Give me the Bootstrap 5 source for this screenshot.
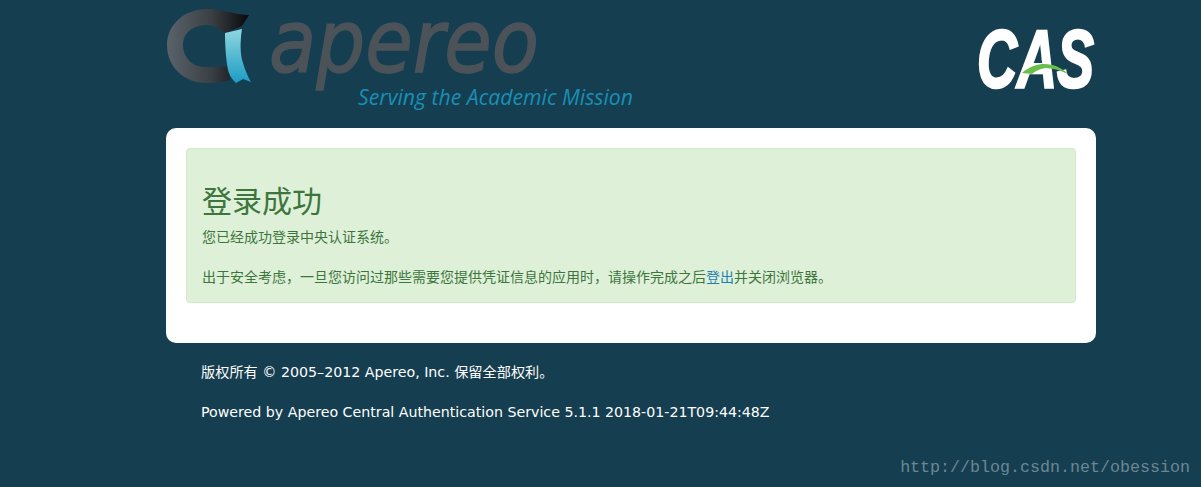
<!DOCTYPE html>
<html lang="zh">
<head>
<meta charset="utf-8">
<title>CAS</title>
<link href="https://cdn.jsdelivr.net/npm/bootstrap@5.3.0/dist/css/bootstrap.min.css" rel="stylesheet">
<style>
html,body{height:487px;overflow:hidden}
body{background:#153e50;font-family:"DejaVu Sans","Noto Sans CJK SC",sans-serif;position:relative}
.shell{width:930px;margin-left:166px}
.brand-row{height:128px}
.logo-left{width:480px;height:128px;display:block}
.logo-cas{width:120px;height:90px;display:block;margin-top:12px}
.panel{background:#fff;border-radius:10px;padding:20px;height:215px}
.ok-box{background:#dff0d8;border:1px solid #d0e9c6;color:#3c763d;border-radius:4px;height:155px;padding:15px;font-family:"Liberation Sans","Noto Sans CJK SC",sans-serif;font-size:14px;line-height:20px}
.ok-box h2{font-size:30px;line-height:33px;font-weight:400;margin:21px 0 9px;color:#3c763d}
.ok-box p{margin:0 0 20px}
.ok-box p.tail{margin-top:-1px}
.ok-box a{color:#1f7fb0;text-decoration:none}
.cn-comma{font-family:"Noto Sans CJK TC",sans-serif}
.foot{padding:19px 35px 0;color:#fff;font-size:14.2px;line-height:20px}
.foot p{margin:0 0 20px}
.mark-url{position:absolute;right:11px;bottom:9px;color:#6b8792;font:16.67px/20px "Liberation Mono",monospace}
</style>
</head>
<body>
<div class="shell">
  <header class="brand-row d-flex justify-content-between align-items-start">
    <svg class="logo-left" viewBox="0 0 480 128" role="img" aria-label="apereo">
      <defs>
        <linearGradient id="ring" x1="0" x2="1" y1="0" y2="0"><stop offset="0" stop-color="#59636a"/><stop offset=".55" stop-color="#3a3f44"/><stop offset="1" stop-color="#08090b"/></linearGradient>
        <linearGradient id="rib" x1="0" x2="0" y1="0" y2="1"><stop offset="0" stop-color="#8fd6e0"/><stop offset="1" stop-color="#1b9cc4"/></linearGradient>
      </defs>
      <path d="M83 15L76 26L59 33C53 28 47 25 41 25C27 25 17 33 17 45C17 58 27 67 39 67C47 67 55 67 62 66L64 80C56 82 49 83 41 83C18 83 1 67 1 45C1 24 19 9 41 9C55 9 69 15 83 15Z" fill="url(#ring)"/>
      <path d="M59 33L76 29C74 42 74 54 77 63C79 70 82 77 85 82L77 79L70 83C65 78 63 74 62 70C60 60 59 46 59 33Z" fill="url(#rib)"/>
      <text x="103" y="72" font-family="DejaVu Sans, sans-serif" font-style="italic" font-size="88" fill="#4b5359" stroke="#4b5359" stroke-width="1.5" textLength="270" lengthAdjust="spacingAndGlyphs">apereo</text>
      <text x="192" y="105" font-family="Open Sans, sans-serif" font-style="italic" font-size="22" fill="#1a8fb5" textLength="275" lengthAdjust="spacingAndGlyphs">Serving the Academic Mission</text>
    </svg>
    <svg class="logo-cas" viewBox="0 0 120 90" role="img" aria-label="CAS">
      <text x="1" y="75" font-family="Liberation Sans, sans-serif" font-weight="700" font-style="italic" font-size="81" fill="#fff" stroke="#fff" stroke-width="2.5" textLength="117" lengthAdjust="spacingAndGlyphs">CAS</text>
      <path d="M46 61C54 54 62 52 68 52C78 52 86 56 92 62C84 58 76 56 69 56C64 57 59 59 56 62Z" fill="#6abf4b"/>
    </svg>
  </header>
  <main class="panel">
    <div class="ok-box">
      <h2>登录成功</h2>
      <p>您已经成功登录中央认证系统。</p>
      <p class="tail">出于安全考虑<span class="cn-comma">，</span>一旦您访问过那些需要您提供凭证信息的应用时<span class="cn-comma">，</span>请操作完成之后<a href="#">登出</a>并关闭浏览器。</p>
    </div>
  </main>
  <footer class="foot">
    <p>版权所有 © 2005–2012 Apereo, Inc. 保留全部权利。</p>
    <p>Powered by Apereo Central Authentication Service 5.1.1 2018-01-21T09:44:48Z</p>
  </footer>
</div>
<div class="mark-url">http://blog.csdn.net/obession</div>
<script src="https://cdn.jsdelivr.net/npm/bootstrap@5.3.0/dist/js/bootstrap.bundle.min.js"></script>
</body>
</html>
